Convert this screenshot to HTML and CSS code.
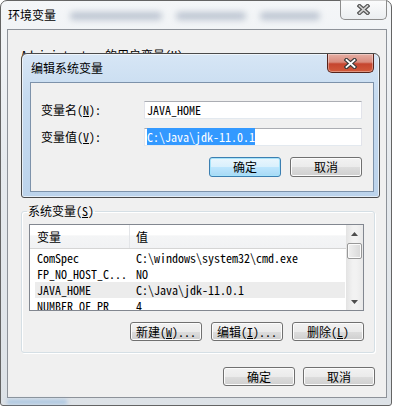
FILE: index.html
```html
<!DOCTYPE html>
<html lang="zh-CN">
<head>
    <meta charset="UTF-8">
    <title>环境变量</title>
    <link rel="stylesheet" href="styles.css">
</head>
<body>
<div class="screen">
    <!-- main window -->
    <div class="window">
        <div class="titlebar">
            <span class="title">环境变量</span>
            <div class="glass" aria-hidden="true">
                <span class="smudge s1"></span>
                <span class="smudge s2"></span>
                <span class="smudge s3"></span>
            </div>
            <div class="close inactive">
                <svg viewBox="0 0 13 11" width="13" height="11">
                    <path d="M2.5 2 L10.5 9 M10.5 2 L2.5 9" stroke="#555" stroke-width="4" stroke-linecap="square"/>
                    <path d="M2.5 2 L10.5 9 M10.5 2 L2.5 9" stroke="#d4d4d4" stroke-width="1.6" stroke-linecap="square"/>
                </svg>
            </div>
        </div>

        <div class="client">
            <fieldset class="group user-group">
                <legend>Administrator 的用户变量(<u>U</u>)</legend>
            </fieldset>

            <fieldset class="group sys-group">
                <legend>系统变量(<u>S</u>)</legend>
                <div class="list">
                    <div class="list-body">
                        <div class="list-head">
                            <span class="col1">变量</span>
                            <span class="col2">值</span>
                        </div>
                        <div class="row"><span class="col1">ComSpec</span><span class="col2">C:\windows\system32\cmd.exe</span></div>
                        <div class="row"><span class="col1">FP_NO_HOST_C...</span><span class="col2">NO</span></div>
                        <div class="row selected"><span class="col1">JAVA_HOME</span><span class="col2">C:\Java\jdk-11.0.1</span></div>
                        <div class="row"><span class="col1">NUMBER_OF_PR</span><span class="col2">4</span></div>
                    </div>
                    <div class="scrollbar">
                        <div class="arrow">
                            <svg viewBox="0 0 7 4" width="7" height="4"><polygon points="0,4 3.5,0 7,4" fill="#4d4d4d"/></svg>
                        </div>
                        <div class="track"><div class="thumb"></div></div>
                        <div class="arrow">
                            <svg viewBox="0 0 7 4" width="7" height="4"><polygon points="0,0 7,0 3.5,4" fill="#4d4d4d"/></svg>
                        </div>
                    </div>
                </div>
                <div class="btn-row">
                    <button class="btn">新建(<u>W</u>)...</button>
                    <button class="btn">编辑(<u>I</u>)...</button>
                    <button class="btn">删除(<u>L</u>)</button>
                </div>
            </fieldset>

            <div class="btn-row footer">
                <button class="btn">确定</button>
                <button class="btn">取消</button>
            </div>
        </div>
        <div class="glow" aria-hidden="true"></div>
    </div>

    <!-- edit dialog, on top of the main window -->
    <div class="dialog">
        <div class="titlebar">
            <span class="title">编辑系统变量</span>
            <div class="close active">
                <svg viewBox="0 0 13 11" width="13" height="11">
                    <path d="M2.5 2 L10.5 9 M10.5 2 L2.5 9" stroke="#3b3b3b" stroke-width="4.2" stroke-linecap="square"/>
                    <path d="M2.5 2 L10.5 9 M10.5 2 L2.5 9" stroke="#fff" stroke-width="1.8" stroke-linecap="square"/>
                </svg>
            </div>
        </div>
        <div class="client">
            <div class="field">
                <label>变量名(<u>N</u>):</label>
                <div class="textbox">JAVA_HOME</div>
            </div>
            <div class="field">
                <label>变量值(<u>V</u>):</label>
                <div class="textbox"><span class="sel">C:\Java\jdk-11.0.1</span></div>
            </div>
            <div class="btn-row">
                <button class="btn default">确定</button>
                <button class="btn">取消</button>
            </div>
        </div>
    </div>
</div>
</body>
</html>
```

FILE: styles.css
```css
/* General */
* {
    box-sizing: border-box;
}

body {
    margin: 0;
    background: #ffffff;
    font-family: "Noto Sans Mono CJK SC", "Noto Sans CJK SC", monospace;
    font-size: 12px;
    color: #000;
}

u {
    text-decoration: underline;
    text-underline-offset: 1px;
}

.screen {
    position: relative;
    width: 394px;
    height: 406px;
    overflow: hidden;
}

/* Main window frame (inactive glass) */
.window {
    position: relative;
    width: 392px;
    height: 406px;
    border: 1px solid #646464;
    border-radius: 7px 7px 3px 3px;
    background: linear-gradient(180deg, #f4f6f8 0%, #e6eaee 40%, #dde2e7 100%);
    padding: 0 4px 7px 6px;
    display: flex;
    flex-direction: column;
}

.titlebar {
    height: 28px;
    display: flex;
    align-items: flex-start;
    flex-shrink: 0;
}

.title {
    font-family: "Noto Sans CJK SC", sans-serif;
    font-size: 12px;
    line-height: 14px;
    margin: 7px 0 0 1px;
    color: #000;
}

.glass {
    flex: 1;
    display: flex;
    gap: 14px;
    padding: 11px 0 0 14px;
}

.smudge {
    height: 8px;
    border-radius: 4px;
    background: rgba(90, 110, 140, 0.35);
    filter: blur(3px);
}

.s1 { width: 92px; }
.s2 { width: 70px; }
.s3 { width: 60px; }

.close {
    width: 47px;
    height: 20px;
    margin-top: -1px;
    border-radius: 0 0 5px 5px;
    display: flex;
    align-items: center;
    justify-content: center;
    flex-shrink: 0;
}

.close.inactive {
    border: 1px solid #8c8c8c;
    border-top: none;
    background: linear-gradient(180deg, rgba(255,255,255,0.7), rgba(230,233,236,0.6));
}

.close.active {
    height: 19px;
    margin-top: 0;
    border: 1px solid #55231b;
    border-top: none;
    background: linear-gradient(180deg, #e5aea4 0%, #d98b7d 45%, #c5452f 55%, #d25a3b 100%);
    box-shadow: inset 0 0 0 1px rgba(255, 255, 255, 0.35);
}

.glow {
    position: absolute;
    left: 6px;
    bottom: 1px;
    width: 60px;
    height: 4px;
    background: rgba(120, 170, 220, 0.6);
    filter: blur(2px);
}

/* Client area */
.window > .client {
    flex: 1;
    border: 1px solid #8d9299;
    background: #f0f0f0;
    padding-top: 18px;
    display: flex;
    flex-direction: column;
}

.group {
    margin: 0 11px 0 13px;
    border: 1px solid #d5dfe5;
    border-radius: 3px;
    min-width: 0;
    box-shadow: inset 1px 1px 0 #fff, 1px 1px 0 #fff;
}

.group legend {
    padding: 0 1px;
    margin-left: -2px;
    line-height: 14px;
    height: 14px;
}

.user-group {
    height: 147px;
    padding: 0;
}

.sys-group {
    height: 149px;
    margin-top: 9px;
    padding: 6px 10px 11px 7px;
    display: flex;
    flex-direction: column;
}

/* List view */
.list {
    height: 87px;
    border: 1px solid #828790;
    background: #fff;
    display: flex;
}

.list-body {
    flex: 1;
    overflow: hidden;
}

.list-head {
    height: 24px;
    display: flex;
    align-items: center;
    background: linear-gradient(180deg, #ffffff 0%, #ffffff 45%, #f4f5f6 46%, #f1f2f4 100%);
    border-bottom: 1px solid #d5d5d5;
    margin-bottom: 1px;
}

.list-head .col1 {
    border-right: 1px solid #e3e5e8;
    height: 23px;
    line-height: 23px;
}

.list-head span {
    font-family: "Noto Sans CJK SC", sans-serif;
    font-size: 12px;
}

.col1 {
    width: 100px;
    padding-left: 7px;
    flex-shrink: 0;
}

.col2 {
    padding-left: 6px;
    white-space: nowrap;
}

.row {
    height: 16px;
    line-height: 16px;
    display: flex;
    white-space: nowrap;
}

.row.selected {
    background: #ececec;
    margin: 0 1px 0 5px;
}

.row.selected .col1 {
    width: 95px;
    padding-left: 2px;
}

.scrollbar {
    width: 17px;
    display: flex;
    flex-direction: column;
    background: linear-gradient(90deg, #e3e3e3, #f2f2f2 40%, #f2f2f2 60%, #e9e9e9);
}

.arrow {
    height: 17px;
    display: flex;
    align-items: center;
    justify-content: center;
}

.track {
    flex: 1;
}

.thumb {
    height: 16px;
    margin: 1px 1px 0;
    border: 1px solid #989898;
    border-radius: 2px;
    background: linear-gradient(90deg, #f0f0f0, #e4e4e4 50%, #d8d8d8);
    box-shadow: inset 0 0 0 1px #fbfbfb;
}

/* Buttons */
.btn-row {
    display: flex;
    justify-content: flex-end;
    gap: 9px;
}

.sys-group .btn-row {
    margin-top: 11px;
}

.footer {
    margin: 14px 11px 0 0;
    gap: 8px;
}

.btn {
    width: 72px;
    height: 19px;
    padding: 0;
    border: 1px solid #707070;
    border-radius: 3px;
    background: linear-gradient(180deg, #f2f2f2 0%, #ebebeb 50%, #dddddd 51%, #cfcfcf 100%);
    box-shadow: inset 0 0 0 1px #fcfcfc;
    font-family: inherit;
    font-size: 12px;
    line-height: 16px;
    color: #000;
}

.btn.default {
    border-color: #3c7fb1;
    background: linear-gradient(180deg, #eaf6fd 0%, #d9f0fc 50%, #bee6fd 51%, #a7d9f5 100%);
    box-shadow: inset 0 0 0 1px #a6e3fa;
}

/* Edit dialog (active glass) */
.dialog {
    position: absolute;
    left: 21px;
    top: 53px;
    width: 359px;
    height: 145px;
    border: 1px solid #4a4a4a;
    border-radius: 6px 6px 3px 3px;
    background: linear-gradient(180deg, #d7e6f5 0%, #c6dbf0 30%, #bcd3eb 100%);
    box-shadow: inset 0 0 0 1px rgba(255, 255, 255, 0.6);
    padding: 0 5px 5px 8px;
    display: flex;
    flex-direction: column;
}

.dialog .titlebar {
    justify-content: space-between;
}

.dialog .title {
    margin: 7px 0 0 1px;
}

.dialog .client {
    flex: 1;
    border: 1px solid #7d92aa;
    background: #f0f0f0;
    padding: 18px 10px 0 10px;
    display: flex;
    flex-direction: column;
    gap: 9px;
}

.field {
    display: flex;
    align-items: center;
}

.field label {
    width: 103px;
    flex-shrink: 0;
    line-height: 18px;
}

.textbox {
    width: 218px;
    height: 18px;
    border: 1px solid #e2e3ea;
    border-top-color: #abadb3;
    border-bottom-color: #e3e9ef;
    background: #fff;
    padding-left: 2px;
    line-height: 16px;
    white-space: nowrap;
}

.sel {
    background: #3399ff;
    color: #fff;
}

.dialog .btn-row {
    margin-top: 2px;
    margin-right: 1px;
}

.dialog .btn {
    height: 20px;
}
```
